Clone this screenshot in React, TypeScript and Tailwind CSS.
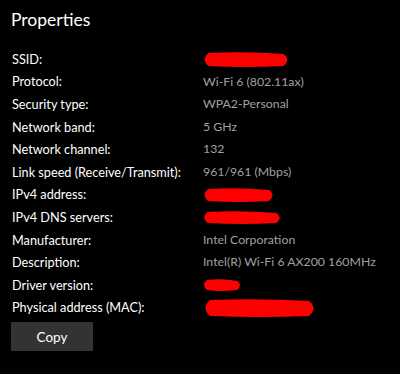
const rows: { label: string; value?: string; redact?: [number, number] }[] = [
  { label: "SSID:", redact: [90, 15] },
  { label: "Protocol:", value: "Wi-Fi 6 (802.11ax)" },
  { label: "Security type:", value: "WPA2-Personal" },
  { label: "Network band:", value: "5 GHz" },
  { label: "Network channel:", value: "132" },
  { label: "Link speed (Receive/Transmit):", value: "961/961 (Mbps)" },
  { label: "IPv4 address:", redact: [75, 14] },
  { label: "IPv4 DNS servers:", redact: [82, 13] },
  { label: "Manufacturer:", value: "Intel Corporation" },
  { label: "Description:", value: "Intel(R) Wi-Fi 6 AX200 160MHz" },
  { label: "Driver version:", redact: [42, 12] },
  { label: "Physical address (MAC):", redact: [117, 18] },
];

// red marker scribble drawn over hidden values
const Scribble = ({ w, h }: { w: number; h: number }) => (
  <svg width={w} height={h} viewBox={`0 0 ${w} ${h}`} className="block -ml-[2px]">
    <path
      d={`M${h / 2} 1 Q${w * 0.5} ${-1} ${w - h / 2} 2 Q${w} ${h / 2} ${w - h / 2} ${h - 1} Q${w * 0.5} ${h + 1} ${h / 2} ${h - 1} Q0 ${h / 2} ${h / 2} 1 Z`}
      fill="#ff0000"
    />
  </svg>
);

export default function App() {
  return (
    <div className="w-[400px] h-[374px] bg-black overflow-hidden font-['Lato',sans-serif]">
      <div className="pl-[11px] pt-[6px] text-[17.5px] leading-[28px] text-white">Properties</div>
      <div className="mt-[14px] pl-[12px]">
        {rows.map((r) => (
          <div key={r.label} className="flex h-[22.6px] items-center text-[12.7px]">
            <span className="w-[191px] shrink-0 text-white whitespace-nowrap">{r.label}</span>
            {r.redact ? (
              <Scribble w={r.redact[0]} h={r.redact[1]} />
            ) : (
              <span className="text-[#a0a0a0] text-[12.3px] whitespace-nowrap">{r.value}</span>
            )}
          </div>
        ))}
      </div>
      <div className="pl-[11px] mt-[3px]">
        <button className="w-[82px] h-[29px] bg-[#333333] text-white text-[13.5px]">Copy</button>
      </div>
    </div>
  );
}
